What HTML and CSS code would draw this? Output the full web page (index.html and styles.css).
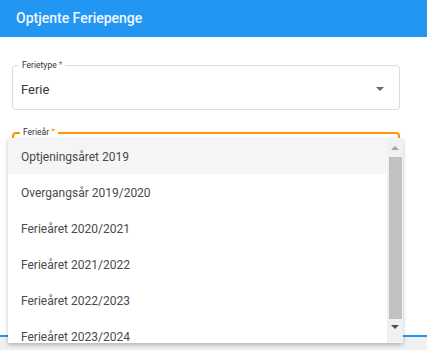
FILE: index.html
```html
<!DOCTYPE html>
<html>
<head>
    <title>Optjente Feriepenge</title>
    <link rel="stylesheet" href="styles.css">
</head>
<body>
    <div class="dialog">
        <div class="dialog-header">Optjente Feriepenge</div>
        <div class="dialog-body">
            <div class="field">
                <span class="field-label">Ferietype <span class="req">*</span></span>
                <span class="field-value">Ferie</span>
                <span class="caret"></span>
            </div>
            <div class="field focused">
                <span class="field-label">Ferieår <span class="req">*</span></span>
            </div>
        </div>
        <div class="dialog-footer"></div>
    </div>

    <div class="dropdown">
        <ul class="options">
            <li class="active">Optjeningsåret 2019</li>
            <li>Overgangsår 2019/2020</li>
            <li>Ferieåret 2020/2021</li>
            <li>Ferieåret 2021/2022</li>
            <li>Ferieåret 2022/2023</li>
            <li>Ferieåret 2023/2024</li>
        </ul>
        <div class="scrollbar">
            <span class="arrow up"></span>
            <span class="thumb"></span>
            <span class="arrow down"></span>
        </div>
    </div>
</body>
</html>
```

FILE: styles.css
```css
body {
    margin: 0;
    font-family: Roboto, "Liberation Sans", sans-serif;
    background-color: #f0f0f0;
    height: 350px;
    overflow: hidden;
}

.dialog {
    background-color: #fff;
}

.dialog-header {
    height: 37px;
    line-height: 37px;
    padding-left: 16px;
    background-color: #2196f3;
    color: #f2f7fd;
    font-size: 14px;
    font-weight: 500;
}

.dialog-body {
    padding: 28px 27px 0 12px;
    height: 270px;
}

.field {
    position: relative;
    height: 43px;
    border: 1px solid #dcdcdc;
    border-radius: 4px;
    display: flex;
    align-items: center;
    padding-left: 8px;
    margin-bottom: 22px;
}

.field-label {
    position: absolute;
    top: -6px;
    left: 6px;
    padding: 0 3px;
    background-color: #fff;
    font-size: 8.5px;
    line-height: 11px;
    color: #333;
}

.field-value {
    font-size: 13px;
    color: #3a3a3a;
    margin-top: 4px;
}

.caret {
    position: absolute;
    right: 15px;
    top: 21px;
    border-left: 4px solid transparent;
    border-right: 4px solid transparent;
    border-top: 4px solid #666;
}

.field.focused {
    border: 2px solid #ff9800;
}

.field.focused .field-label {
    top: -7px;
}

.req {
    color: #777;
}

.focused .req {
    color: #ff9800;
}

.dialog-footer {
    height: 2px;
    background-color: #2196f3;
}

.dropdown {
    position: absolute;
    top: 138px;
    left: 8px;
    width: 395px;
    height: 205px;
    background-color: #fff;
    box-shadow: 0 2px 4px rgba(0, 0, 0, 0.25);
    display: flex;
    overflow: hidden;
}

.options {
    list-style: none;
    margin: 0;
    padding: 0;
    flex: 1;
}

.options li {
    height: 36px;
    line-height: 38px;
    padding-left: 13px;
    font-size: 12px;
    color: #4a4a4a;
}

.options li.active {
    background-color: #f5f5f5;
}

.scrollbar {
    width: 16px;
    background-color: #f1f1f1;
    display: flex;
    flex-direction: column;
    align-items: center;
}

.thumb {
    width: 13px;
    height: 162px;
    background-color: #c1c1c1;
    margin: 1px 0 6px;
}

.arrow {
    width: 0;
    height: 0;
    border-left: 4px solid transparent;
    border-right: 4px solid transparent;
}

.arrow.up {
    margin-top: 8px;
    margin-bottom: 6px;
    border-bottom: 4px solid #a3a3a3;
}

.arrow.down {
    border-top: 4px solid #505050;
}
```
